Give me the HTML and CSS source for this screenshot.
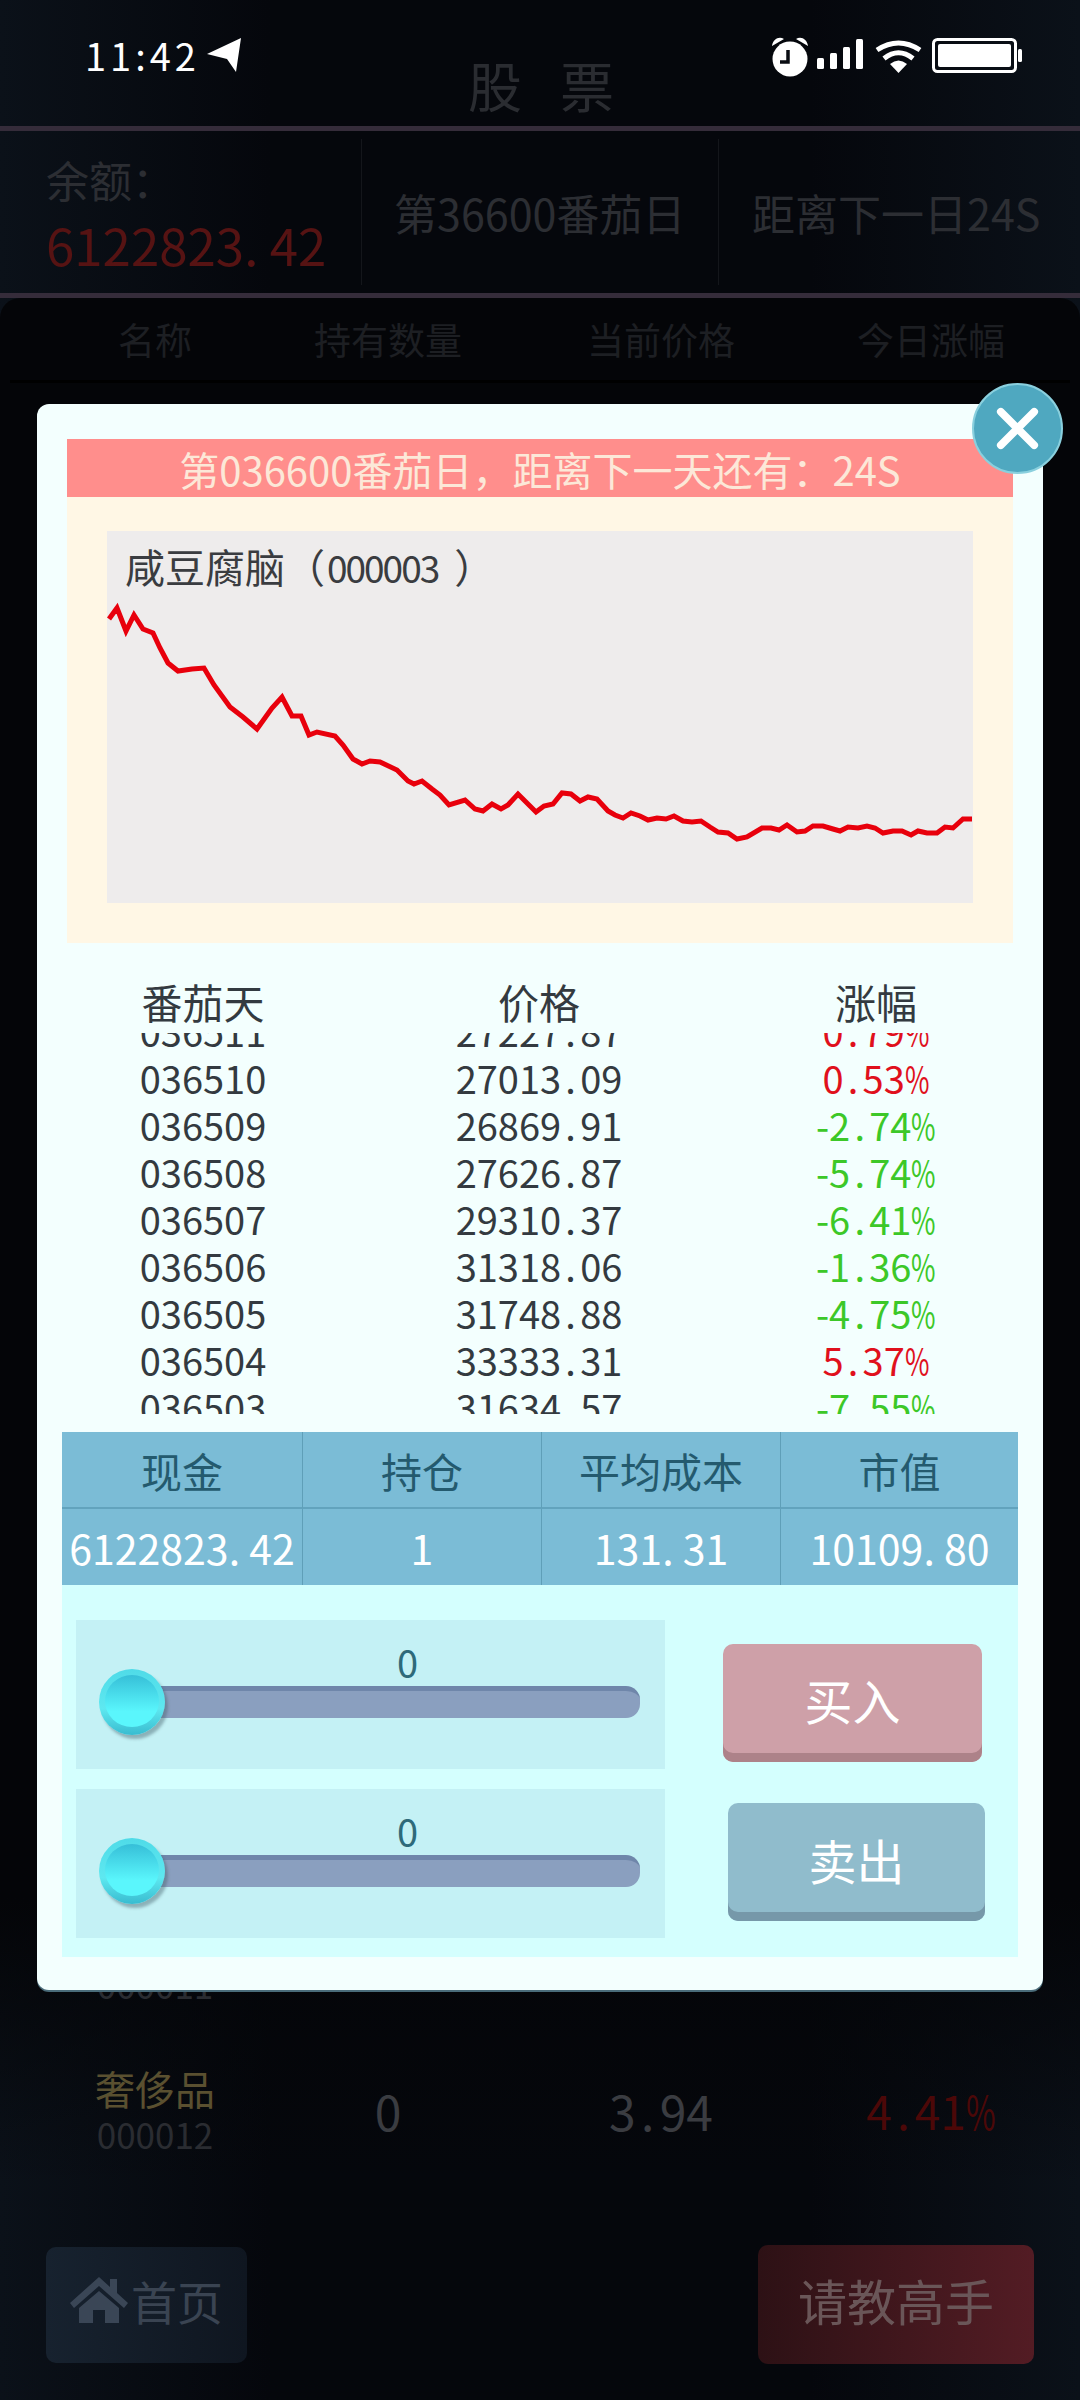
FILE: index.html
```html
<!DOCTYPE html>
<html lang="zh">
<head>
    <meta charset="UTF-8">
    <meta name="viewport" content="width=device-width, initial-scale=1.0">
    <title>股票</title>
    <link rel="stylesheet" href="styles.css">
</head>
<body>
    <div class="status-bar">
        <div class="status-left">
            <span class="status-time">11:42</span>
            <svg class="icon-location" viewBox="0 0 34 34"><polygon points="34,0 0,16 20,21 29,34" fill="#fff"/></svg>
        </div>
        <div class="status-right">
            <svg class="icon-alarm" viewBox="0 0 38 40">
                <circle cx="19" cy="22" r="17.5" fill="#fff"/>
                <path d="M1 9 C2 2 8 -1 13 2 Z M37 9 C36 2 30 -1 25 2 Z" fill="#fff"/>
                <path d="M17 13 V25 H9" fill="none" stroke="#0a0d12" stroke-width="3.5"/>
            </svg>
            <svg class="icon-signal" viewBox="0 0 47 30" fill="#fff">
                <rect x="0" y="19" width="7" height="11" rx="1.5"/>
                <rect x="13" y="14" width="7" height="16" rx="1.5"/>
                <rect x="26" y="8" width="7" height="22" rx="1.5"/>
                <rect x="39" y="0" width="7" height="30" rx="1.5"/>
            </svg>
            <svg class="icon-wifi" viewBox="0 0 47 33" fill="none" stroke="#fff" stroke-width="5">
                <path d="M2 10 Q23.5 -4 45 10"/>
                <path d="M9 18.5 Q23.5 7 38 18.5"/>
                <path d="M15 24 Q23.5 17 32 24 L23.5 33 Z" fill="#fff" stroke="none"/>
            </svg>
            <svg class="icon-battery" viewBox="0 0 90 35">
                <rect x="1.5" y="1.5" width="82" height="32" rx="4" fill="none" stroke="#fff" stroke-width="3"/>
                <rect x="6" y="6" width="73" height="23" rx="2" fill="#fff"/>
                <rect x="86" y="11" width="4" height="13" rx="1.5" fill="#fff"/>
            </svg>
        </div>
    </div>

    <div class="page">
        <header class="top-title">股 票</header>

        <section class="account-row">
            <div class="account-cell balance">
                <div class="balance-label">余额：</div>
                <div class="balance-value">6122823<span class="pt">.</span>42</div>
            </div>
            <div class="account-cell">第36600番茄日</div>
            <div class="account-cell next-day">距离下一日24S</div>
        </section>

        <section class="stock-card">
            <div class="stock-head">
                <span>名称</span>
                <span>持有数量</span>
                <span>当前价格</span>
                <span>今日涨幅</span>
            </div>
            <div class="stock-list">
                <div class="stock-row">
                    <div class="stock-name-cell">
                        <div class="stock-name">&nbsp;</div>
                        <div class="stock-code">000011</div>
                    </div>
                </div>
                <div class="stock-row">
                    <div class="stock-name-cell">
                        <div class="stock-name">奢侈品</div>
                        <div class="stock-code">000012</div>
                    </div>
                    <div class="stock-num">0</div>
                    <div class="stock-num">3<span class="pt">.</span>94</div>
                    <div class="stock-rise">4<span class="pt">.</span>41<span class="pct">%</span></div>
                </div>
            </div>
        </section>

        <footer class="bottom-bar">
            <button class="home-btn">
                <svg class="icon-home" viewBox="0 0 58 46" fill="#3a4656">
                    <path d="M29 0 L40 10 V2 H47 V16 L58 26 L54 31 L29 9 L4 31 L0 26 Z"/>
                    <path d="M29 14 L49 31 V46 H35 V33 H23 V46 H9 V31 Z"/>
                </svg>首页
            </button>
            <button class="master-btn">请教高手</button>
        </footer>
    </div>

    <div class="modal">
        <div class="close-btn">
            <svg viewBox="0 0 91 91"><path d="M28 28 L63 63 M63 28 L28 63" stroke="#fff" stroke-width="8" stroke-linecap="round"/></svg>
        </div>

        <div class="day-banner">第036600番茄日，距离下一天还有：24S</div>
        <div class="chart-panel">
            <div class="chart">
                <div class="chart-title">咸豆腐脑（<span class="chart-code">000003</span>）</div>
                <svg class="chart-line" viewBox="0 0 866 372">
                    <polyline fill="none" stroke="#e8000c" stroke-width="5" stroke-linejoin="miter" points="2,88 10,77 19,100 27,84 36,98 46,102 53,117 61,132 71,140 85,138 97,137 107,154 123,176 136,186 150,198 165,177 175,166 185,185 194,185 202,204 210,201 228,205 236,214 246,228 255,233 263,230 273,231 290,239 301,250 307,253 315,250 325,258 333,264 342,274 358,269 368,278 376,280 385,273 394,278 401,274 411,263 429,281 437,275 446,273 455,262 464,263 473,270 481,266 490,268 501,280 508,284 516,287 524,282 533,285 541,289 550,287 559,288 567,285 576,290 585,291 594,290 603,296 611,301 621,302 630,308 640,306 655,297 664,297 672,299 680,294 690,301 698,300 706,295 716,295 726,298 733,300 741,296 751,297 760,295 768,297 776,302 786,300 795,300 804,304 811,300 820,302 830,302 838,296 846,297 856,288 865,288"/>
                </svg>
            </div>
        </div>

        <div class="history-head">
            <span>番茄天</span>
            <span>价格</span>
            <span>涨幅</span>
        </div>
        <div class="history-scroll">
            <div class="history-list">
                <div class="history-row"><span>036511</span><span>27227<span class="pt">.</span>87</span><span class="up">0<span class="pt">.</span>79<span class="pct">%</span></span></div>
                <div class="history-row"><span>036510</span><span>27013<span class="pt">.</span>09</span><span class="up">0<span class="pt">.</span>53<span class="pct">%</span></span></div>
                <div class="history-row"><span>036509</span><span>26869<span class="pt">.</span>91</span><span class="down">-2<span class="pt">.</span>74<span class="pct">%</span></span></div>
                <div class="history-row"><span>036508</span><span>27626<span class="pt">.</span>87</span><span class="down">-5<span class="pt">.</span>74<span class="pct">%</span></span></div>
                <div class="history-row"><span>036507</span><span>29310<span class="pt">.</span>37</span><span class="down">-6<span class="pt">.</span>41<span class="pct">%</span></span></div>
                <div class="history-row"><span>036506</span><span>31318<span class="pt">.</span>06</span><span class="down">-1<span class="pt">.</span>36<span class="pct">%</span></span></div>
                <div class="history-row"><span>036505</span><span>31748<span class="pt">.</span>88</span><span class="down">-4<span class="pt">.</span>75<span class="pct">%</span></span></div>
                <div class="history-row"><span>036504</span><span>33333<span class="pt">.</span>31</span><span class="up">5<span class="pt">.</span>37<span class="pct">%</span></span></div>
                <div class="history-row"><span>036503</span><span>31634<span class="pt">.</span>57</span><span class="down">-7<span class="pt">.</span>55<span class="pct">%</span></span></div>
            </div>
        </div>

        <div class="holding-table">
            <div class="holding-head">现金</div>
            <div class="holding-head">持仓</div>
            <div class="holding-head">平均成本</div>
            <div class="holding-head">市值</div>
            <div class="holding-value">6122823<span class="pt">.</span>42</div>
            <div class="holding-value">1</div>
            <div class="holding-value">131<span class="pt">.</span>31</div>
            <div class="holding-value">10109<span class="pt">.</span>80</div>
        </div>

        <div class="trade-panel">
            <div class="trade-row">
                <div class="slider-box">
                    <div class="slider-value">0</div>
                    <div class="slider-track"></div>
                    <div class="slider-thumb"></div>
                </div>
                <button class="trade-btn buy-btn">买入</button>
            </div>
            <div class="trade-row">
                <div class="slider-box">
                    <div class="slider-value">0</div>
                    <div class="slider-track"></div>
                    <div class="slider-thumb"></div>
                </div>
                <button class="trade-btn sell-btn">卖出</button>
            </div>
        </div>
    </div>
</body>
</html>
```

FILE: styles.css
```css
* {
    box-sizing: border-box;
}
body {
    margin: 0;
    width: 1080px;
    height: 2400px;
    position: relative;
    overflow: hidden;
    font-family: "Noto Sans CJK SC", "Noto Sans", sans-serif;
    background: linear-gradient(90deg, #0b1119, #05070c 25%, #05070c 75%, #0b1119);
}
.pt {
    display: inline-block;
    width: .5em;
}
.pct {
    display: inline-block;
    width: .65em;
    transform: scaleX(.7);
    transform-origin: left;
}

/* status bar */
.status-bar {
    position: absolute;
    left: 0;
    top: 37px;
    width: 100%;
    display: flex;
    justify-content: space-between;
    padding: 0 58px 0 85px;
    color: #fff;
}
.status-left {
    display: flex;
    align-items: center;
    height: 36px;
}
.status-time {
    font-size: 38px;
    letter-spacing: 4px;
    line-height: 36px;
}
.icon-location {
    width: 34px;
    height: 34px;
    margin-left: 7px;
}
.status-right {
    display: flex;
    align-items: flex-start;
}
.icon-alarm {
    width: 38px;
    height: 40px;
}
.icon-signal {
    width: 47px;
    height: 30px;
    margin: 2px 0 0 8px;
}
.icon-wifi {
    width: 47px;
    height: 33px;
    margin: 3px 0 0 11px;
}
.icon-battery {
    width: 90px;
    height: 35px;
    margin: 1px 0 0 10px;
}

/* page behind the dialog */
.page {
    height: 2400px;
    display: flex;
    flex-direction: column;
}
.top-title {
    height: 126px;
    padding: 44px 0 0 15px;
    line-height: 82px;
    text-align: center;
    font-size: 54px;
    letter-spacing: 13px;
    color: #2a2c31;
}
.account-row {
    height: 172px;
    display: flex;
    border-top: 5px solid #352c3a;
    border-bottom: 5px solid #352c3a;
    padding: 8px 0;
    color: #2c2e33;
    font-size: 43px;
}
.account-cell {
    flex: 1;
    display: flex;
    align-items: center;
    justify-content: center;
    border-left: 1px solid #14161b;
}
.account-cell.next-day {
    padding-right: 6px;
}
.account-cell.balance {
    flex: 0 0 361px;
    flex-direction: column;
    align-items: flex-start;
    padding-left: 46px;
    border-left: none;
}
.balance-label {
    line-height: 65px;
}
.balance-value {
    font-size: 51px;
    line-height: 65px;
    color: #561313;
}
.stock-card {
    height: 1887px;
    display: flex;
    flex-direction: column;
    border-radius: 20px 20px 0 0;
    background: linear-gradient(#040508, #040508 1600px, rgba(4, 5, 8, 0));
}
.stock-head {
    height: 85px;
    flex: none;
    display: grid;
    grid-template-columns: 290px 176px 370px 170px;
    align-items: center;
    margin: 0 10px;
    text-align: center;
    font-size: 37px;
    color: #1d1f23;
    border-bottom: 3px solid #000;
}
.stock-list {
    flex: 1;
    display: flex;
    flex-direction: column;
    justify-content: flex-end;
    overflow: hidden;
}
.stock-row {
    height: 150px;
    flex: none;
    display: grid;
    grid-template-columns: 310px 156px 390px 150px;
    align-items: center;
    text-align: center;
    font-size: 48px;
    color: #3a3c41;
}
.stock-name {
    font-size: 40px;
    line-height: 48px;
    color: #5a5030;
}
.stock-code {
    font-size: 35px;
    line-height: 44px;
    color: #2a2c31;
}
.stock-rise {
    font-size: 46px;
    color: #4c0808;
}
.bottom-bar {
    flex: 1;
    display: flex;
    justify-content: space-between;
    align-items: flex-start;
    padding: 60px 46px 0;
}
.home-btn,
.master-btn {
    border: none;
    border-radius: 10px;
    font-family: inherit;
    padding: 0 0 10px;
}
.home-btn {
    width: 201px;
    height: 116px;
    margin-top: 2px;
    display: flex;
    align-items: center;
    justify-content: center;
    font-size: 46px;
    color: #3a4452;
    background: linear-gradient(90deg, #17222f, #0f1620);
}
.icon-home {
    width: 58px;
    height: 46px;
    margin-right: 3px;
}
.master-btn {
    width: 276px;
    height: 119px;
    font-size: 49px;
    color: #6a5658;
    background: linear-gradient(90deg, #2d1115, #531c24);
}

/* dialog */
.modal {
    position: absolute;
    left: 37px;
    top: 404px;
    width: 1006px;
    height: 1586px;
    padding: 35px 25px 0;
    border-radius: 12px;
    background: #f3fffe;
    box-shadow: 0 2px 0 #4a6c7a;
}
.close-btn {
    position: absolute;
    left: 935px;
    top: -21px;
    width: 91px;
    height: 91px;
    border-radius: 50%;
    background: #4fa8c0;
    border: 2px solid #8ad0de;
}
.close-btn svg {
    display: block;
    width: 87px;
    height: 87px;
}
.day-banner {
    height: 58px;
    margin: 0 5px;
    line-height: 60px;
    text-align: center;
    font-size: 40px;
    color: #fce8d8;
    background: #ff8e8c;
}
.chart-panel {
    height: 446px;
    margin: 0 5px;
    padding: 34px 40px 0;
    background: #fff7e5;
}
.chart {
    height: 372px;
    position: relative;
    background: #eeecec;
}
.chart-title {
    padding-left: 18px;
    line-height: 70px;
    font-size: 40px;
    color: #3a3c40;
}
.chart-code {
    font-size: 37px;
    letter-spacing: -2px;
    margin: 0 16px 0 2px;
}
.chart-line {
    position: absolute;
    left: 0;
    top: 0;
    width: 866px;
    height: 372px;
}
.history-head,
.history-row {
    display: grid;
    grid-template-columns: 282px 390px 284px;
    text-align: center;
    color: #333a40;
}
.history-head {
    height: 90px;
    padding-top: 27px;
    font-size: 41px;
    line-height: 62px;
}
.history-scroll {
    height: 381px;
    overflow: hidden;
}
.history-list {
    margin-top: -26px;
}
.history-row {
    height: 47px;
    line-height: 47px;
    font-size: 38px;
}
.up {
    color: #e0101c;
}
.down {
    color: #3cc828;
}
.holding-table {
    margin-top: 18px;
    display: grid;
    grid-template-columns: 241px 239px 239px 237px;
    grid-template-rows: 77px 76px;
    background: #7bbcd6;
}
.holding-head,
.holding-value {
    display: flex;
    align-items: center;
    justify-content: center;
    border-right: 1px solid #5f9fb8;
}
.holding-head:nth-child(4),
.holding-value:nth-child(8) {
    border-right: none;
}
.holding-head {
    font-size: 41px;
    color: #245a6e;
    border-bottom: 2px solid #62a3bd;
}
.holding-value {
    font-size: 41px;
    color: #fff;
}
.trade-panel {
    height: 372px;
    padding: 35px 14px 0;
    background: #d4fffe;
    display: flex;
    flex-direction: column;
    gap: 20px;
}
.trade-row {
    display: flex;
    height: 149px;
}
.slider-box {
    width: 589px;
    position: relative;
    background: #c4f1f5;
}
.slider-value {
    padding: 21px 0 0 321px;
    height: 66px;
    line-height: 42px;
    font-size: 38px;
    color: #2e6a7a;
}
.slider-track {
    height: 32px;
    margin: 0 25px 0 40px;
    border-radius: 0 14px 14px 0;
    background: #8a9fbf;
    border-top: 5px solid #6f86aa;
}
.slider-thumb {
    position: absolute;
    left: 23px;
    top: 49px;
    width: 66px;
    height: 66px;
    border-radius: 50%;
    background: linear-gradient(#4fdbe8, #5ee8f0 60%, #38bcd0);
    box-shadow: 3px 4px 3px rgba(70, 100, 110, .45);
}
.slider-thumb::after {
    content: "";
    position: absolute;
    left: 6px;
    top: 6px;
    width: 54px;
    height: 52px;
    border-radius: 50%;
    background: linear-gradient(#36bfd8, #5af6fc 70%);
}
.trade-btn {
    border: none;
    padding: 0 0 8px;
    border-radius: 10px;
    font-family: inherit;
    font-size: 48px;
    color: #fff;
}
.buy-btn {
    width: 259px;
    height: 118px;
    margin: 24px 0 0 58px;
    background: #cea0a8;
    box-shadow: inset 0 -9px 0 #ad8289;
}
.sell-btn {
    width: 257px;
    height: 118px;
    margin: 14px 0 0 63px;
    padding-bottom: 6px;
    background: #90bccc;
    box-shadow: inset 0 -9px 0 #7698a9;
}
```
